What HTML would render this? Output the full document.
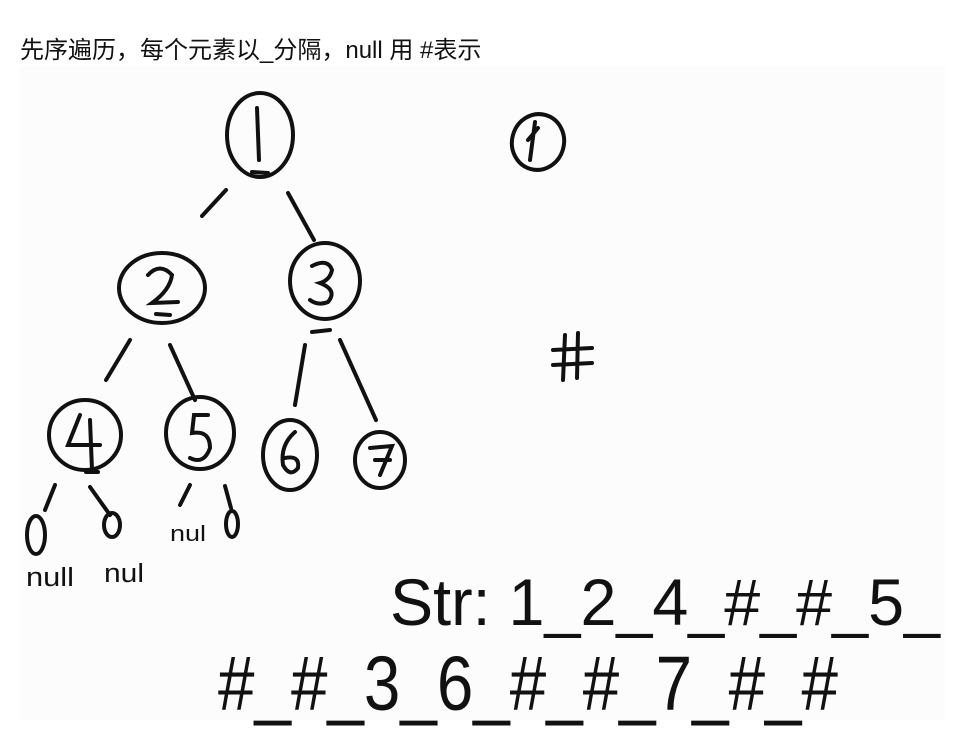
<!DOCTYPE html>
<html><head><meta charset="utf-8"><style>
html,body{margin:0;padding:0;background:#fff;width:959px;height:731px;overflow:hidden}
.t{position:absolute;left:20px;top:30px;font:24px "Liberation Sans","Noto Sans CJK SC",sans-serif;color:#111}
svg{position:absolute;left:0;top:0}
</style></head><body>
<div class="t">先序遍历，每个元素以_分隔，null 用 #表示</div>
<svg width="959" height="731" viewBox="0 0 959 731">
<rect x="20" y="66" width="925" height="654" fill="#fdfcfd"/>
<g fill="none" stroke="#111" stroke-width="4" stroke-linecap="round">
<ellipse cx="260" cy="135" rx="33" ry="42"/>
<path d="M257 108 L259 160 M252 172 L268 173"/>
<path d="M226 190 L202 216 M288 193 L314 240"/>
<ellipse cx="162" cy="288" rx="43" ry="35"/>
<path d="M148 275 Q160 262 172 275 Q170 290 152 303 L178 302 M156 314 L170 315"/>
<ellipse cx="325" cy="281" rx="35" ry="38"/>
<path d="M312 266 Q328 258 332 270 Q330 280 320 283 Q338 290 328 302 Q318 306 310 300 M312 332 L330 330"/>
<path d="M130 340 L106 380 M170 345 L195 400 M305 345 L295 405 M340 340 L376 420"/>
<ellipse cx="85" cy="435" rx="36" ry="35"/>
<path d="M80 415 L68 445 L100 445 M90 420 L92 470 M86 472 L98 472"/>
<ellipse cx="200" cy="433" rx="34" ry="36"/>
<path d="M208 415 L194 415 L192 433 Q210 430 210 448 Q204 465 190 458"/>
<ellipse cx="290" cy="455" rx="27" ry="35"/>
<path d="M295 432 Q280 445 283 465 Q290 478 298 468 Q300 455 285 458"/>
<ellipse cx="380" cy="460" rx="25" ry="28"/>
<path d="M370 448 L392 446 L380 475 M375 460 L390 460"/>
<path d="M55 485 L45 510 M90 487 L110 515 M190 485 L180 505 M225 486 L231 508"/>
<ellipse cx="36" cy="535" rx="9" ry="19"/>
<ellipse cx="112" cy="525" rx="8" ry="12"/>
<ellipse cx="232" cy="524" rx="6" ry="13"/>
<ellipse cx="538" cy="142" rx="26" ry="28" transform="rotate(15 538 142)"/>
<path d="M535 122 L530 160 M528 140 L538 128"/>
<path d="M565 335 L563 380 M578 333 L577 378 M553 350 L592 348 M553 365 L592 363"/>
</g>
<g fill="#111" font-family="'Liberation Sans Narrow','Liberation Sans',sans-serif">
<text transform="translate(170 541) scale(1 1.4)" font-size="16" textLength="36" lengthAdjust="spacingAndGlyphs">nul</text>
<text transform="translate(26 586) scale(1 1.5)" font-size="17" textLength="48" lengthAdjust="spacingAndGlyphs">null</text>
<text transform="translate(104 582) scale(1 1.5)" font-size="17" textLength="40" lengthAdjust="spacingAndGlyphs">nul</text>
<text transform="translate(390 625) scale(1 1.5)" font-size="44" textLength="550" lengthAdjust="spacingAndGlyphs">Str: 1_2_4_#_#_5_</text>
<text transform="translate(218 710) scale(1 1.6)" font-size="48" textLength="620" lengthAdjust="spacingAndGlyphs">#_#_3_6_#_#_7_#_#</text>
</g>
</svg>
</body></html>
